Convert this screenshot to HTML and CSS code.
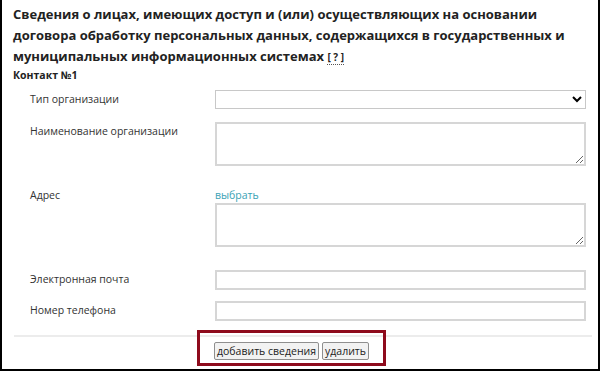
FILE: index.html
```html
<!DOCTYPE html>
<html>
<head>
    <title>Контакты</title>
    <link rel="stylesheet" href="styles.css">
</head>
<body>
    <div class="frame">
        <h2 class="title">Сведения о лицах, имеющих доступ и (или) осуществляющих на основании договора обработку персональных данных, содержащихся в государственных и муниципальных информационных системах <abbr class="hint" title="Справка">[ ? ]</abbr></h2>

        <div class="contact">
            <h3 class="contact-title">Контакт №1</h3>

            <div class="row row-first">
                <label class="label">Тип организации</label>
                <div class="field">
                    <select class="input select"><option></option></select>
                </div>
            </div>
            <div class="row">
                <label class="label">Наименование организации</label>
                <div class="field">
                    <textarea class="input area"></textarea>
                </div>
            </div>
            <div class="row row-address">
                <label class="label">Адрес</label>
                <div class="field">
                    <a class="pick" href="#">выбрать</a>
                    <textarea class="input area"></textarea>
                </div>
            </div>
            <div class="row">
                <label class="label">Электронная почта</label>
                <div class="field">
                    <input class="input text" type="text">
                </div>
            </div>
            <div class="row">
                <label class="label">Номер телефона</label>
                <div class="field">
                    <input class="input text" type="text">
                </div>
            </div>
        </div>

        <div class="actions">
            <div class="highlight">
                <button class="btn">добавить сведения</button>
                <button class="btn">удалить</button>
            </div>
        </div>
    </div>
</body>
</html>
```

FILE: styles.css
```css
/* Page */
body {
    margin: 0;
    font-family: "Open Sans", "Noto Sans", sans-serif;
    color: #333;
    background: #fff;
}

.frame {
    box-sizing: border-box;
    width: 600px;
    height: 371px;
    border: 2px solid #000;
    border-top: none;
    padding: 4px 12px 0 11px;
    overflow: hidden;
}

/* Heading */
.title {
    margin: 0;
    font-size: 13px;
    line-height: 21px;
    font-weight: 700;
    color: #222;
}

.hint {
    font-size: 10px;
    text-decoration: none;
    border-bottom: 1px dotted #555;
    cursor: help;
}

/* Contact block */
.contact-title {
    margin: 0 0 7px 0;
    font-size: 10.5px;
    line-height: 15px;
    font-weight: 700;
    color: #222;
}

.row {
    display: grid;
    grid-template-columns: 185px 1fr;
    padding-left: 17px;
    margin-bottom: 11px;
}

.row-first {
    margin-bottom: 13px;
}

.row-address {
    margin-top: 20px;
    margin-bottom: 23px;
}

.label {
    font-size: 10.5px;
    line-height: 15px;
    padding-top: 2px;
}

.field {
    display: flex;
    flex-direction: column;
}

.pick {
    font-size: 10.5px;
    line-height: 15px;
    padding-top: 2px;
    color: #3aa3b5;
    text-decoration: none;
}

.input {
    box-sizing: border-box;
    width: 100%;
    background: #fff;
    margin: 0;
    font-family: inherit;
}

.select {
    height: 19px;
    border: 1px solid #c8c8c8;
    font-size: 10.5px;
}

.area {
    height: 44px;
    border: 2px solid #d6d6d6;
}

.text {
    height: 20px;
    border: 2px solid #d6d6d6;
}

/* Buttons */
.actions {
    margin: 14px -6px 0 1px;
    border-top: 2px solid #ececec;
    padding-left: 183px;
}

.highlight {
    display: inline-flex;
    align-items: flex-start;
    gap: 3px;
    border: 3px solid #8e0b1c;
    padding: 9px 14px 3px 14px;
    margin-top: -7px;
}

.btn {
    box-sizing: border-box;
    height: 18px;
    font-family: inherit;
    font-size: 10.5px;
    line-height: 14px;
    padding: 1px 2px;
    color: #222;
    background: #f2f2f2;
    border: 1px solid #8f8f8f;
    border-radius: 2px;
}
```
